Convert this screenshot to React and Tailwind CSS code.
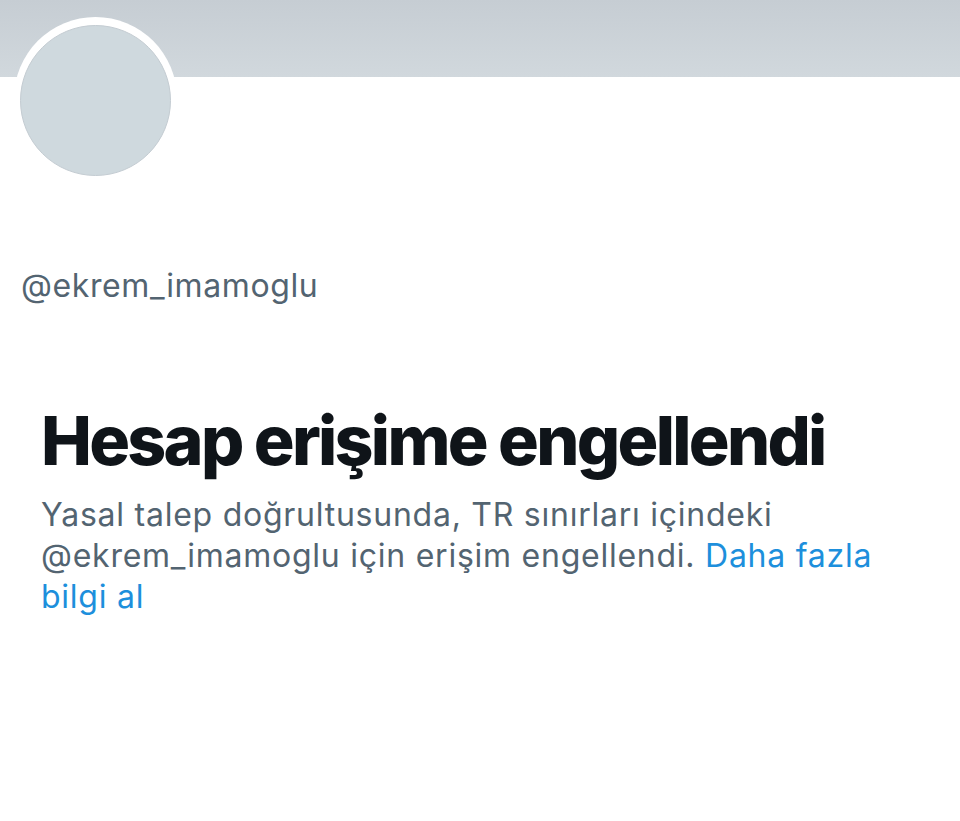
export default function App() {
  return (
    <div className="min-h-[821px] w-[960px] bg-white font-['Inter',sans-serif] overflow-hidden">
      {/* banner */}
      <div className="h-[77px] bg-gradient-to-b from-[#c6cdd3] to-[#d1d8dd]" />

      {/* avatar */}
      <div className="-mt-[60px] ml-[14px] w-[163px] h-[163px] rounded-full bg-white flex items-center justify-center">
        <div className="mt-[4px] w-[151px] h-[151px] rounded-full bg-[#cfd9de] border border-[#c4ccd2]" />
      </div>

      <div className="pl-[21px] mt-[88px]">
        <p className="text-[32px] leading-[36px] text-[#536471] tracking-[0.6px]">@ekrem_imamoglu</p>
      </div>

      <div className="pl-[41px] pr-[80px] mt-[96px]">
        <h1 className="text-[68px] leading-[80px] font-extrabold text-[#0f1419] tracking-[-2.7px]">
          Hesap erişime engellendi
        </h1>
        <p className="mt-[14px] text-[32px] leading-[41px] text-[#536471] tracking-[0.75px]">
          Yasal talep doğrultusunda, TR sınırları içindeki @ekrem_imamoglu için erişim engellendi.{' '}
          <span className="text-[#1d8fdc]">Daha fazla bilgi al</span>
        </p>
      </div>
    </div>
  );
}
